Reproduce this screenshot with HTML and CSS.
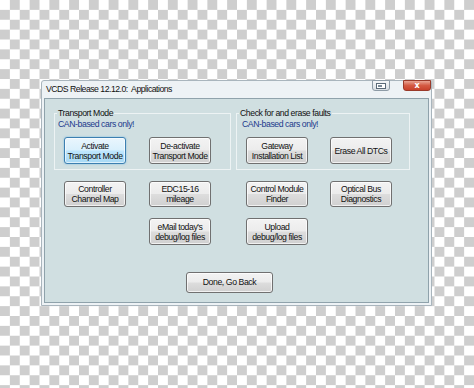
FILE: index.html
```html
<!DOCTYPE html>
<html>
<head>
<meta charset="utf-8">
<link rel="stylesheet" href="styles.css">
</head>
<body>
<div class="window">
  <div class="titlebar">
    <span class="title">VCDS Release 12.12.0:&nbsp; Applications</span>
    <div class="caption-btns">
      <span class="cbtn help"><svg width="10" height="6" viewBox="0 0 10 6"><rect x="0.5" y="0.5" width="9" height="5" fill="#fff" stroke="#5a6a78"/><rect x="2" y="2" width="4" height="2" fill="#7a8a98"/></svg></span>
      <span class="cbtn close">x</span>
    </div>
  </div>
  <div class="client">
    <div class="groups">
      <fieldset class="group g-left">
        <legend>Transport Mode</legend>
        <div class="note">CAN-based cars only!</div>
        <div class="btnrow">
          <button class="btn default">Activate<br>Transport Mode</button>
          <button class="btn">De-activate<br>Transport Mode</button>
        </div>
      </fieldset>
      <fieldset class="group g-right">
        <legend>Check for and erase faults</legend>
        <div class="note">CAN-based cars only!</div>
        <div class="btnrow">
          <button class="btn">Gateway<br>Installation List</button>
          <button class="btn">Erase All DTCs</button>
        </div>
      </fieldset>
    </div>
    <div class="grid">
      <button class="btn r2 c1">Controller<br>Channel Map</button>
      <button class="btn r2 c2">EDC15-16<br>mileage</button>
      <button class="btn r2 c3">Control Module<br>Finder</button>
      <button class="btn r2 c4">Optical Bus<br>Diagnostics</button>
      <button class="btn r3 c2">eMail today's<br>debug/log files</button>
      <button class="btn r3 c3">Upload<br>debug/log files</button>
    </div>
    <div class="done-row"><button class="btn done">Done, Go Back</button></div>
  </div>
</div>
</body>
</html>
```
FILE: styles.css
```css
html, body {
  margin: 0;
  padding: 0;
}
body {
  width: 474px;
  height: 388px;
  overflow: hidden;
  background: repeating-conic-gradient(#cecece 0 25%, #ffffff 0 50%) 0 0 / 19.75px 19.75px;
  font-family: "Liberation Sans", Arial, sans-serif;
  padding: 80px 0 0 41px;
  box-sizing: border-box;
}
.window {
  width: 391px;
  height: 226px;
  box-sizing: border-box;
  border: 1px solid #a9b5bd;
  border-radius: 3px 3px 0 0;
  background: #edf2f5;
  display: flex;
  flex-direction: column;
}
.titlebar {
  height: 17px;
  display: flex;
  align-items: flex-start;
  justify-content: space-between;
}
.title {
  font-size: 8.7px;
  letter-spacing: -0.5px;
  color: #111;
  line-height: 17px;
  padding-left: 4px;
}
.caption-btns {
  display: flex;
  gap: 13px;
  margin-top: -1px;
}
.cbtn {
  height: 11px;
  box-sizing: border-box;
  border-radius: 0 0 3px 3px;
  display: flex;
  align-items: center;
  justify-content: center;
}
.help {
  width: 18px;
  border: 1px solid #8d9ba6;
  background: linear-gradient(#f4f6f8, #d8dee3);
}
.close {
  width: 28px;
  border: 1px solid #9a3a2a;
  background: linear-gradient(#e9a493, #d45a43 50%, #c8412b);
  color: #fff;
  font-family: "DejaVu Sans", sans-serif;
  font-weight: bold;
  font-size: 8px;
  line-height: 9px;
}
.client {
  width: 385px;
  height: 205px;
  box-sizing: border-box;
  margin-left: 2px;
  border: 1px solid #8fa2ab;
  background: #d0dfe1;
  padding-top: 9px;
}
.groups {
  display: flex;
}
.group {
  margin: 0;
  padding: 0 0 5px 0;
  min-width: 0;
  box-sizing: border-box;
  border: 1px solid #edf3f4;
}
.g-left {
  width: 177px;
  margin-left: 9px;
}
.g-right {
  width: 174px;
  margin-left: 5px;
}
legend {
  font-size: 8.7px;
  letter-spacing: -0.42px;
  line-height: 10px;
  color: #111;
  padding: 0 1px;
  margin-left: 2px;
}
.note {
  font-size: 8.7px;
  letter-spacing: -0.42px;
  line-height: 10px;
  color: #1c3a8c;
  margin-top: 1px;
}
.g-left .note { padding-left: 3px; }
.g-right .note { padding-left: 5px; }
.btnrow {
  display: flex;
  margin-top: 8px;
  padding-left: 9px;
}
.g-left .btnrow { gap: 23px; }
.g-right .btnrow { gap: 22px; }
.btn {
  width: 62px;
  height: 27px;
  margin: 0;
  padding: 0;
  box-sizing: border-box;
  border: 1px solid #707070;
  border-radius: 3px;
  background: linear-gradient(#f3f3f3, #ececec 48%, #dddddd 52%, #d0d0d0);
  font-family: "Liberation Sans", Arial, sans-serif;
  font-size: 8.7px;
  letter-spacing: -0.42px;
  line-height: 10px;
  color: #111;
  text-align: center;
  box-shadow: inset 0 0 0 1px rgba(255,255,255,0.7);
}
.btn.default {
  border-color: #3c7fb1;
  background: linear-gradient(#eaf6fd, #d9f0fc 48%, #bee6fd 52%, #a7d9f5);
  box-shadow: inset 0 0 0 1px rgba(255,255,255,0.6), 0 0 2px rgba(80,170,230,0.7);
}
.grid {
  display: grid;
  grid-template-columns: 62px 23px 62px 35px 62px 22px 62px;
  grid-template-rows: 26px 27px;
  row-gap: 11px;
  margin: 11px 0 0 19px;
}
.grid .btn { height: 100%; }
.r2 { grid-row: 1; }
.r3 { grid-row: 2; }
.c1 { grid-column: 1; }
.c2 { grid-column: 3; }
.c3 { grid-column: 5; }
.c4 { grid-column: 7; }
.done-row {
  margin: 26px 0 0 141px;
}
.btn.done {
  width: 87px;
  height: 21px;
}
```
